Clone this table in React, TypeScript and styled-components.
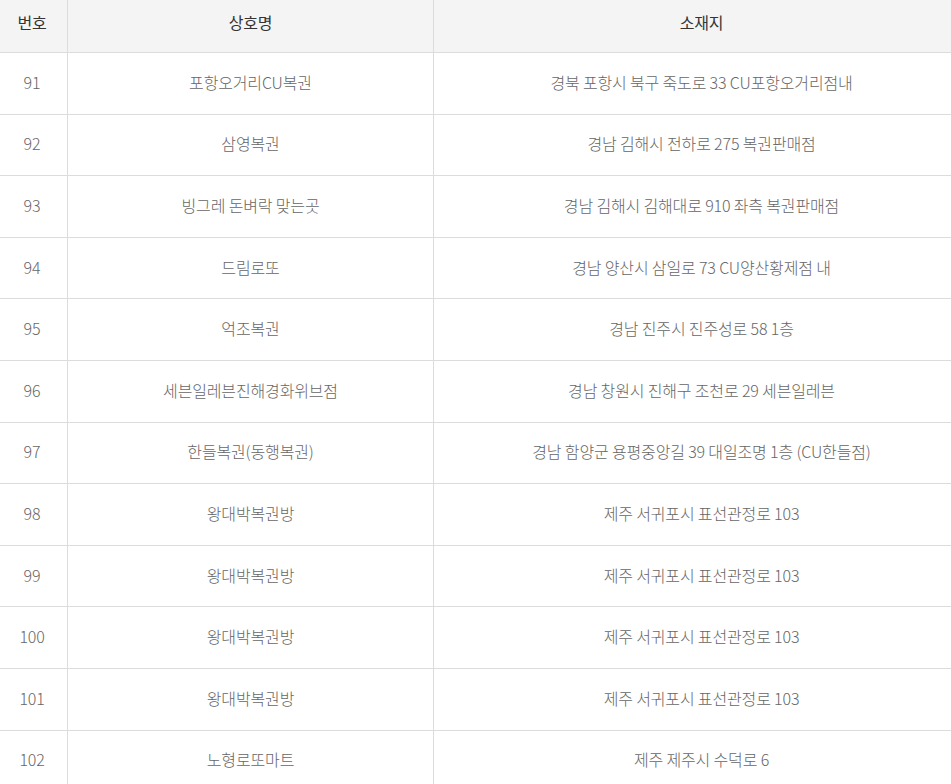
import React from "react";
import styled, { createGlobalStyle } from "styled-components";

const GlobalStyle = createGlobalStyle`
  html, body {
    margin: 0;
    padding: 0;
    background: #fff;
  }
  body {
    font-family: "Noto Sans CJK KR", "Noto Sans", sans-serif;
  }
`;

const Wrap = styled.div`
  width: 951px;
  overflow: hidden;
`;

const Table = styled.table`
  width: 969px;
  border-collapse: separate;
  border-spacing: 0;
  table-layout: fixed;
  font-size: 16px;
  letter-spacing: -0.15px;
`;

const Th = styled.th`
  height: 53px;
  padding: 0 0 9px;
  box-sizing: border-box;
  background: #f4f4f4;
  color: #333;
  font-weight: 400;
  text-align: center;
  vertical-align: middle;
  border-bottom: 1px solid #dcdcdc;
  border-left: 1px solid #dcdcdc;

  &:first-child {
    border-left: none;
    padding-right: 3px;
  }
`;

const Td = styled.td`
  height: 61.6px;
  padding: 0 0 3px;
  box-sizing: border-box;
  color: #666;
  font-weight: 300;
  text-align: center;
  vertical-align: middle;
  border-bottom: 1px solid #dcdcdc;
  border-left: 1px solid #dcdcdc;

  &:first-child {
    border-left: none;
    padding-right: 3px;
  }
`;

interface Shop {
  no: number;
  name: string;
  address: string;
}

const shops: Shop[] = [
  { no: 91, name: "포항오거리CU복권", address: "경북 포항시 북구 죽도로 33 CU포항오거리점내" },
  { no: 92, name: "삼영복권", address: "경남 김해시 전하로 275 복권판매점" },
  { no: 93, name: "빙그레 돈벼락 맞는곳", address: "경남 김해시 김해대로 910 좌측 복권판매점" },
  { no: 94, name: "드림로또", address: "경남 양산시 삼일로 73 CU양산황제점 내" },
  { no: 95, name: "억조복권", address: "경남 진주시 진주성로 58 1층" },
  { no: 96, name: "세븐일레븐진해경화위브점", address: "경남 창원시 진해구 조천로 29 세븐일레븐" },
  { no: 97, name: "한들복권(동행복권)", address: "경남 함양군 용평중앙길 39 대일조명 1층 (CU한들점)" },
  { no: 98, name: "왕대박복권방", address: "제주 서귀포시 표선관정로 103" },
  { no: 99, name: "왕대박복권방", address: "제주 서귀포시 표선관정로 103" },
  { no: 100, name: "왕대박복권방", address: "제주 서귀포시 표선관정로 103" },
  { no: 101, name: "왕대박복권방", address: "제주 서귀포시 표선관정로 103" },
  { no: 102, name: "노형로또마트", address: "제주 제주시 수덕로 6" },
];

const App = () => {
  return (
    <>
      <GlobalStyle />
      <Wrap>
        <Table>
          <colgroup>
            <col style={{ width: 67 }} />
            <col style={{ width: 366 }} />
            <col />
          </colgroup>
          <thead>
            <tr>
              <Th>번호</Th>
              <Th>상호명</Th>
              <Th>소재지</Th>
            </tr>
          </thead>
          <tbody>
            {shops.map((shop) => (
              <tr key={shop.no}>
                <Td>{shop.no}</Td>
                <Td>{shop.name}</Td>
                <Td>{shop.address}</Td>
              </tr>
            ))}
          </tbody>
        </Table>
      </Wrap>
    </>
  );
};

export default App;
